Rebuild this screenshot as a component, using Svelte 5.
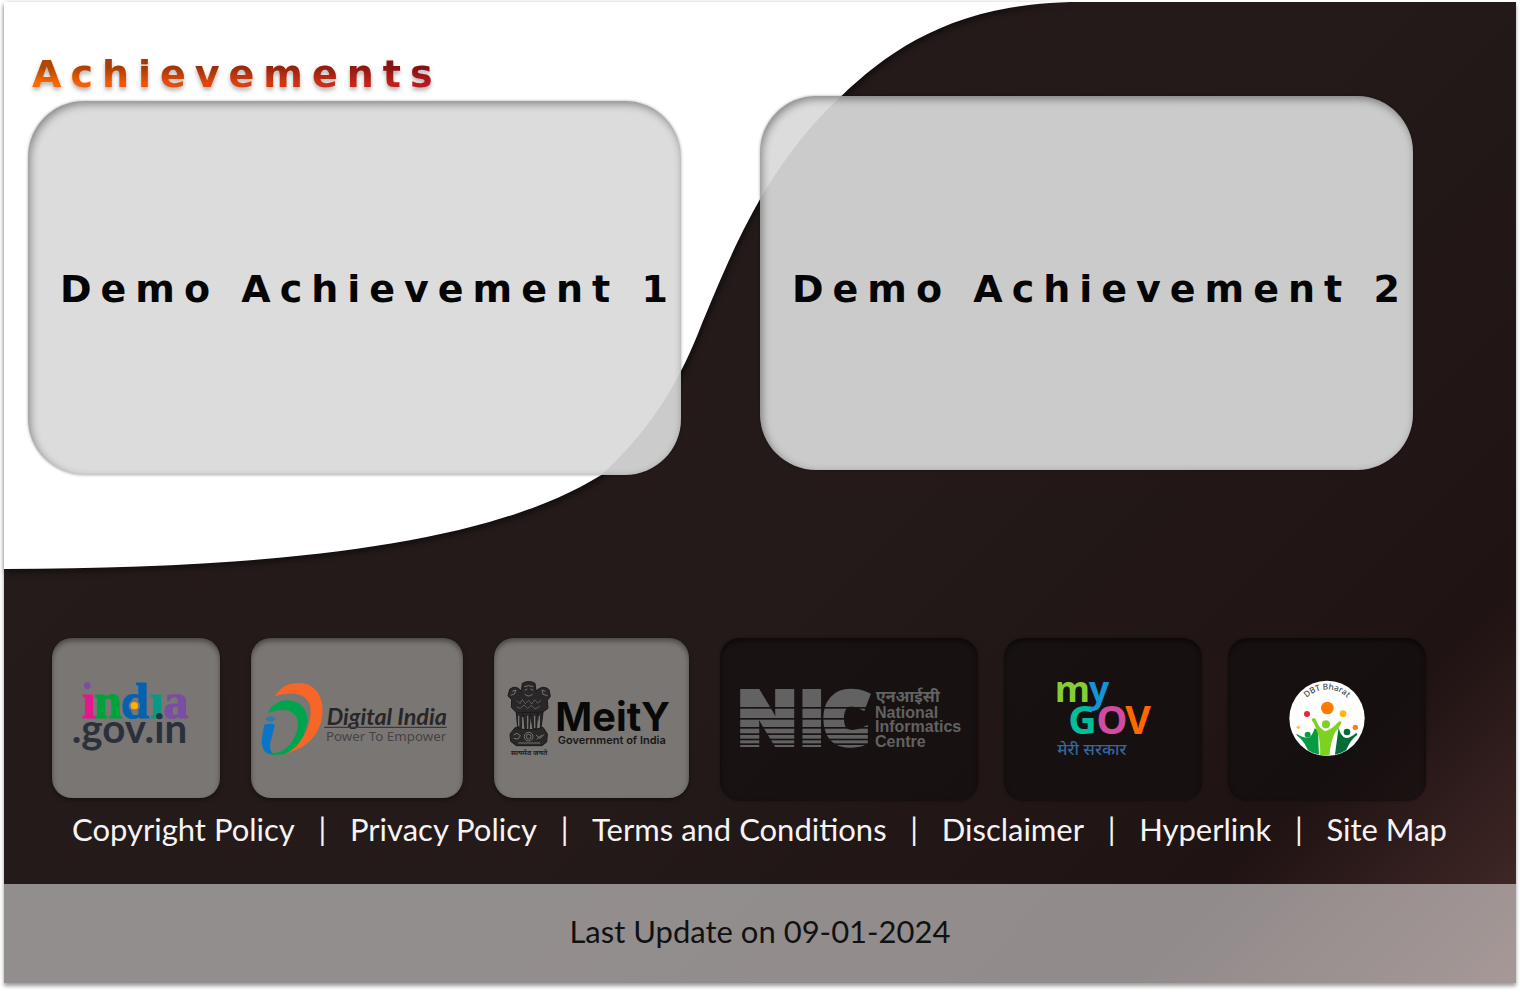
<script>
  const achievements = ['Demo Achievement 1', 'Demo Achievement 2'];
  const links = ['Copyright Policy', 'Privacy Policy', 'Terms and Conditions', 'Disclaimer', 'Hyperlink', 'Site Map'];
  const nicLines = [
    [231, 5], [264, 5], [291, 5], [310, 5], [326, 5], [340, 5]
  ];
</script>

<div class="page">
  <svg class="wave" viewBox="0 0 1076 567" preserveAspectRatio="none" aria-hidden="true">
    <path d="M0 0H1076C955 0 888 45 836 95C807 121 781 155 758 193C734 234 716 277 697 323C678 373 650 425 597 473C480 546 260 566 0 567Z" fill="#fff" />
  </svg>

  <main>
    <h1>Achievements</h1>
    <section class="cards">
      {#each achievements as title}
        <article class="card"><h2>{title}</h2></article>
      {/each}
    </section>

    <section class="logos">
      <div class="group portals">
        <a class="tile light" href="#india" aria-label="india.gov.in">
          <svg viewBox="36 24 504 480">
            <g font-family="Liberation Serif" font-weight="700" font-size="152" stroke-width="3">
              <text x="125" y="263" fill="#e5178f" stroke="#e5178f">ı</text>
              <text x="162" y="263" fill="#00a33b" stroke="#00a33b">n</text>
              <text x="243" y="263" fill="#0562b1" stroke="#0562b1">d</text>
              <text x="330" y="263" fill="#079b86" stroke="#079b86">ı</text>
              <text x="370" y="263" fill="#7b4da3" stroke="#7b4da3">a</text>
            </g>
            <circle cx="142" cy="167" r="10" fill="#7b4da3" />
            <circle cx="283" cy="227" r="17" fill="#7a7674" />
            <circle cx="283" cy="227" r="11" fill="#ffb000" />
            <text x="95" y="339" font-family="Lato" font-weight="700" font-size="121" fill="#2b313c">.gov.in</text>
          </svg>
        </a>

        <a class="tile light" href="#digital-india" aria-label="Digital India">
          <svg viewBox="30 24 636 480">
            <path d="M101 199C122 165 150 157 177 159C222 161 246 199 245 243C243 304 206 354 132 371C177 346 207 301 209 245C210 198 169 178 101 199Z" fill="#f76527" />
            <path d="M81 250C91 222 119 208 145 211C183 215 202 244 199 275C193 326 157 374 108 375C86 376 72 369 66 357C78 369 98 372 117 365C147 353 168 318 171 284C173 244 132 228 81 250Z" fill="#00a44c" />
            <path d="M70 284Q88 279 102 284L90 331Q82 359 96 372Q69 374 63 346Q60 333 70 284Z" fill="#0875c8" />
            <path d="M73 266Q88 251 104 266L93 276H85Z" fill="#287bb7" />
            <text x="257" y="284" font-family="Lato" font-weight="700" font-style="italic" font-size="70" fill="#282628">Digital India</text>
            <path d="M250 292H617" stroke="#3d393b" stroke-width="4" />
            <text x="255" y="333" font-family="Noto Sans" font-size="40" fill="#474345">Power To Empower</text>
          </svg>
        </a>

        <a class="tile light" href="#meity" aria-label="MeitY, Government of India">
          <svg viewBox="27 24 585 480">
            <g fill="#292727" stroke="#1b1a1a" stroke-width="3">
              <path d="M112 160Q131 149 150 160L153 183Q174 163 192 179L196 199L187 211L189 235L166 252H98L79 232L80 209L69 198L74 178Q92 163 109 183Z" />
              <path d="M94 248L98 296L107 303L115 252L121 303H132L136 252L145 303H154L158 250L168 296L174 246Z" />
              <path d="M91 292Q132 307 174 292L187 312L185 336L171 347H94L77 334L75 312Z" />
            </g>
            <g fill="none" stroke="#777371" stroke-width="3">
              <path d="M118 170Q130 164 145 170M119 181L127 177M136 177L145 181M119 192Q131 204 143 192M82 184L93 180L88 192L77 196M181 184L171 180L174 193L188 197" />
              <path d="M96 212L105 221L112 209L121 221L131 211L140 222L149 209L158 219L168 211M95 231L106 235L117 225L128 236L139 226L150 237L165 229" stroke-width="2" />
              <path d="M101 257V289M113 261V291M128 257V297M149 257V294M163 257V288" stroke-width="4" />
              <circle cx="131" cy="320" r="13" /><circle cx="131" cy="320" r="7" />
              <path d="M86 315L96 310L106 317L99 327L86 325M153 315L165 325L178 313M155 327L172 315M100 339H166" />
            </g>
            <text x="77" y="376" font-family="Noto Sans, sans-serif" font-weight="700" font-size="21" fill="#222">सत्यमेव जयते</text>
            <text x="211" y="302" font-family="Inter" font-weight="700" font-size="119" fill="#090909">MeitY</text>
            <text x="218" y="342" font-family="Inter" font-weight="600" font-size="33" fill="#171616">Government of India</text>
          </svg>
        </a>
      </div>

      <div class="group partners">
        <a class="tile dark" href="#nic" aria-label="National Informatics Centre">
          <svg viewBox="30 24 774 489">
            <g fill="#626262" stroke="#626262" font-weight="900" text-anchor="middle">
              <text x="172" y="346" font-family="Inter" font-size="222" stroke-width="12">N</text>
              <text x="305" y="346" font-family="Inter" font-size="222" stroke-width="12">I</text>
              <text x="408" y="342" font-family="Noto Sans" font-size="212" stroke-width="20">C</text>
            </g>
            {#each nicLines as [y, h]}
              <rect x="70" {y} width="410" height={h} fill="#191212" />
            {/each}
            <g font-family="Liberation Sans" font-weight="700" font-size="48" fill="#626262">
              <text x="497" y="216" font-family="Noto Sans, sans-serif" font-size="49">एनआईसी</text>
              <text x="495" y="264">National</text>
              <text x="495" y="307">Informatics</text>
              <text x="495" y="350">Centre</text>
            </g>
          </svg>
        </a>

        <a class="tile dark" href="#mygov" aria-label="myGov">
          <svg viewBox="12 24 594 489">
            <g font-family="Open Sans" font-weight="700">
              <text x="164" y="216" font-size="108" fill="#84cf36">m</text>
              <text x="205" y="311" font-size="118" fill="#00bd9d">G</text>
              <text x="266" y="216" font-size="108" fill="#1693d4">y</text>
              <text x="289" y="311" font-size="118" fill="#cf4ca2">O</text>
              <text x="376" y="311" font-size="118" fill="#ff6700">V</text>
            </g>
            <text x="172" y="374" font-family="Noto Sans, sans-serif" font-weight="500" font-size="50" fill="#34679c">मेरी सरकार</text>
          </svg>
        </a>

        <a class="tile dark" href="#dbt" aria-label="DBT Bharat">
          <svg viewBox="24 24 594 489">
            <defs>
              <clipPath id="dbt-disc"><circle cx="321" cy="265" r="112" /></clipPath>
              <path id="dbt-arc" d="M242 229A87 87 0 0 1 400 229" />
            </defs>
            <circle cx="321" cy="265" r="113" fill="#fff" />
            <g clip-path="url(#dbt-disc)">
              <path d="M230 311Q248 324 267 323Q278 315 284 295L294 301L297 380H270Q259 337 230 316Z" fill="#079b42" />
              <path d="M356 292Q360 319 378 324Q393 323 409 308L412 314Q392 330 383 351L370 380H344Z" fill="#056c38" />
              <path d="M275 269Q279 260 287 268Q296 294 315 304Q337 297 355 276Q361 271 364 278Q361 287 346 306Q331 335 328 380H300Q303 335 291 303Q285 284 275 269Z" fill="#7ed021" />
            </g>
            <circle cx="322" cy="234" r="19" fill="#ff7a00" /><circle cx="318" cy="283" r="12" fill="#7ed021" />
            <circle cx="261" cy="252" r="9" fill="#ee2435" /><circle cx="369" cy="251" r="10" fill="#ffb900" />
            <circle cx="235" cy="292" r="5" fill="#ffc52c" /><circle cx="406" cy="292" r="8" fill="#fb781d" />
            <circle cx="263" cy="314" r="9" fill="#079b42" /><circle cx="381" cy="306" r="10" fill="#056c38" />
            <text font-family="Noto Sans" font-weight="500" font-size="25" fill="#484b50" text-anchor="middle">
              <textPath href="#dbt-arc" startOffset="50%">DBT Bharat</textPath>
            </text>
          </svg>
        </a>
      </div>
    </section>

    <nav aria-label="Policies">
      {#each links as link, i}
        {#if i > 0}<span aria-hidden="true">|</span>{/if}
        <a href="#{link.toLowerCase().replaceAll(' ', '-')}">{link}</a>
      {/each}
    </nav>
  </main>

  <footer>Last Update on 09-01-2024</footer>
</div>

<style>
  :global(body) {
    margin: 0;
    background: #fff;
  }
  .page {
    position: relative;
    margin: 2px 4px 8px;
    background: linear-gradient(135deg, #241b1b 0%, #241a1a 55%, #201313 84%, #392322 94%, #4b2e2c 100%);
    box-shadow: 0 3px 4px rgba(0, 0, 0, 0.4);
    font-family: Lato, sans-serif;
  }
  .wave {
    position: absolute;
    top: 0;
    left: 0;
    width: 71.2%;
    height: 567px;
    filter: drop-shadow(2px 3px 3px rgba(0, 0, 0, 0.5));
  }
  main {
    position: relative;
    padding-top: 50px;
  }
  h1,
  h2 {
    margin: 0;
    font: 700 38px/44px 'DejaVu Sans', sans-serif;
    letter-spacing: 9px;
    white-space: nowrap;
  }
  h1 {
    width: max-content;
    margin-left: 28px;
    color: transparent;
    background:
      linear-gradient(rgba(0, 0, 0, 0.3) 35%, transparent 70%),
      linear-gradient(90deg, #ff6a00, #b8141f);
    background-clip: text;
    filter: drop-shadow(0 3px 2px rgba(0, 0, 0, 0.3));
  }
  .cards {
    display: grid;
    grid-template-columns: 1fr 1fr;
    gap: 79px;
    align-items: start;
    padding: 0 103px 0 24px;
  }
  .card {
    display: flex;
    align-items: center;
    box-sizing: border-box;
    min-width: 0;
    min-height: 374px;
    padding: 12px 0 0 32px;
    border-radius: 56px;
    background: rgba(217, 217, 217, 0.93);
    box-shadow:
      inset 2px 3px 8px rgba(0, 0, 0, 0.4),
      0 0 3px rgba(0, 0, 0, 0.35);
    color: #050505;
  }
  .card:first-child {
    margin-top: 5px;
    padding-top: 2px;
  }
  .logos {
    display: grid;
    grid-template-columns: 637fr 706fr;
    gap: 31px;
    margin-top: 163px;
    padding: 0 90px 0 48px;
  }
  .group {
    display: grid;
    align-items: start;
  }
  .portals {
    grid-template-columns: 168fr 212fr 195fr;
    gap: 31px;
  }
  .partners {
    grid-template-columns: 258fr 198fr 198fr;
    gap: 26px;
  }
  .tile {
    border-radius: 20px;
  }
  .tile svg {
    display: block;
    width: 100%;
    height: auto;
  }
  .light {
    background: #7a7674;
    box-shadow:
      inset 0 3px 5px rgba(0, 0, 0, 0.4),
      0 2px 5px rgba(0, 0, 0, 0.4);
  }
  .dark {
    background: rgba(16, 13, 13, 0.6);
    box-shadow:
      inset 0 3px 5px rgba(0, 0, 0, 0.45),
      0 0 3px rgba(16, 13, 13, 0.4);
  }
  nav {
    display: flex;
    justify-content: space-between;
    padding: 10px 69px 37px 68px;
    color: #f5f3f3;
    font-size: 31px;
    line-height: 36px;
    white-space: nowrap;
  }
  nav a {
    color: inherit;
    text-decoration: none;
  }
  footer {
    padding: 29px 0 34px;
    background: rgba(255, 255, 255, 0.51);
    color: #111;
    font-size: 31px;
    line-height: 36px;
    text-align: center;
  }
</style>
